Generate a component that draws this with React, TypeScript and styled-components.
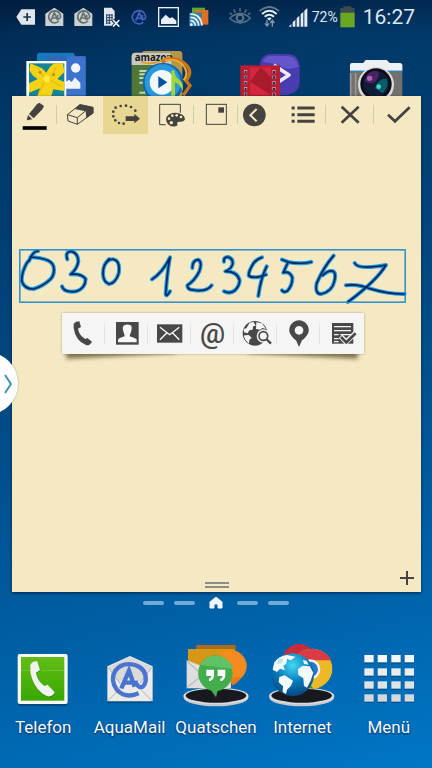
import React from "react";
import styled, { createGlobalStyle } from "styled-components";

const Global = createGlobalStyle`
  * { box-sizing: border-box; }
  body { margin: 0; font-family: Roboto, "Noto Sans", sans-serif; }
  button { border: 0; padding: 0; margin: 0; background: none; font: inherit; color: inherit; cursor: pointer; }
  svg { display: block; }
`;

const Screen = styled.div`
  position: relative;
  min-height: 100vh;
  display: flex;
  flex-direction: column;
  overflow: hidden;
  background: linear-gradient(165deg, #01264d 0%, #013766 12%, #00477f 42%, #0062a9 78%, #0076c6 100%);
`;

const StatusBar = styled.header`
  height: 33px;
  padding: 0 17px 0 16px;
  display: flex;
  align-items: center;
  justify-content: space-between;
  background: linear-gradient(rgba(0, 12, 35, 0.35), rgba(0, 12, 35, 0));
  color: #dce8f4;
`;

const StatusGroup = styled.div<{ $gap: number }>`
  display: flex;
  align-items: center;
  gap: ${(p) => p.$gap}px;
`;

const Percent = styled.span`
  font-size: 14px;
  line-height: 20px;
  margin-left: -4px;
`;

const Clock = styled.time`
  font-size: 21px;
  line-height: 24px;
`;

const HomeRow = styled.div`
  height: 63px;
  padding-top: 17px;
  display: grid;
  grid-template-columns: repeat(4, 1fr);
  overflow: hidden;
`;

const HomeApp = styled.button`
  display: flex;
  justify-content: center;
  align-items: flex-start;
`;

const Note = styled.main`
  flex: 1;
  margin: 0 11px 0 12px;
  display: flex;
  flex-direction: column;
  background: #f4e9c3;
  box-shadow: 0 1px 3px rgba(0, 15, 40, 0.7);
`;

const Toolbar = styled.div`
  height: 38px;
  display: grid;
  grid-template-columns: 45fr 46fr 45fr 46fr 44fr 34fr 54fr 48fr 47fr;
`;

const Tool = styled.button<{ $active?: boolean; $divider?: boolean; $end?: boolean }>`
  display: flex;
  justify-content: ${(p) => (p.$end ? "flex-end" : "center")};
  background: ${(p) =>
    p.$divider ? "linear-gradient(#d5cbab, #d5cbab) right 9px / 1px 19px no-repeat" : "none"};
  background-color: ${(p) => (p.$active ? "#e8d792" : "transparent")};
`;

const Canvas = styled.div`
  flex: 1;
  padding: 115px 15px 0 7px;
`;

const Selection = styled.div`
  outline: 1px solid #2f93d3;
  outline-offset: -1px;
  box-shadow: inset 0 0 0 2px rgba(70, 150, 190, 0.65);

  svg {
    width: 100%;
    height: auto;
    overflow: visible;
  }
`;

const ActionMenu = styled.div`
  position: relative;
  width: 302px;
  height: 41px;
  margin: 10px auto 0;

  &::before,
  &::after {
    content: "";
    position: absolute;
    bottom: -2px;
    width: 110px;
    height: 14px;
    background: rgba(80, 65, 25, 0.7);
    filter: blur(2px);
  }
  &::before {
    left: 4px;
    transform: rotate(-3deg);
  }
  &::after {
    right: 6px;
    transform: rotate(3deg);
  }
`;

const ActionList = styled.div`
  position: relative;
  z-index: 1;
  height: 100%;
  display: grid;
  grid-template-columns: repeat(7, 1fr);
  background: #f5f5f5;
  box-shadow: 0 0 2px rgba(120, 105, 60, 0.6);
`;

const Action = styled.button`
  display: flex;
  align-items: center;
  justify-content: center;
  color: #484848;
  font-size: 28px;
  line-height: 32px;
  font-weight: 500;

  &:not(:last-child) {
    background: linear-gradient(#e3e3e3, #e3e3e3) right center / 1px 20px no-repeat;
  }
`;

const NoteFooter = styled.div`
  height: 28px;
  display: grid;
  grid-template-columns: 1fr 24px 1fr;
  align-items: start;
`;

const Grip = styled.button`
  grid-column: 2;
  height: 6px;
  margin-top: 18px;
  border-top: 2px solid #8f8d86;
  border-bottom: 2px solid #8f8d86;
`;

const AddPage = styled.button`
  justify-self: end;
  width: 14px;
  height: 14px;
  margin: 7px 7px 0 0;
`;

const Pager = styled.nav`
  height: 50px;
  padding-top: 3px;
  display: flex;
  justify-content: center;
  align-items: flex-start;
  gap: 10px;
`;

const PageMark = styled.button<{ $home?: boolean }>`
  width: ${(p) => (p.$home ? 22 : 21)}px;
  height: 16px;
  display: flex;
  align-items: center;
  justify-content: center;

  &::before {
    content: "";
    display: ${(p) => (p.$home ? "none" : "block")};
    width: 100%;
    height: 4px;
    border-radius: 2px;
    background: #70abd8;
  }
`;

const Dock = styled.footer`
  height: 126px;
  display: grid;
  grid-template-columns: repeat(5, 1fr);
`;

const DockApp = styled.button`
  display: flex;
  flex-direction: column;
  align-items: center;
  gap: 9px;
  color: #f4f8fc;
  font-size: 17px;
  line-height: 20px;
  white-space: nowrap;
  text-shadow: 0 1px 2px rgba(0, 20, 50, 0.8);
`;

const EdgeHandle = styled.button`
  position: absolute;
  left: -44px;
  top: 352px;
  width: 62px;
  height: 63px;
  border-radius: 50%;
  background: #fff;
  box-shadow: 0 0 2px rgba(60, 60, 60, 0.4);

  svg {
    margin-left: 48px;
  }
`;

const ink = "#45423f";

function StatusIcons() {
  return (
    <StatusGroup $gap={10}>
      <svg width="19" height="18" viewBox="48 20 57 54">
        <path d="M49 47 L64 24 H105 V70 H64Z" fill="#dfe6ec" />
        <path d="M70 47H93M81.500 35V59" stroke="#14304f" strokeWidth="5" />
      </svg>
      {[0, 1].map((n) => (
        <svg key={n} width="19" height="20" viewBox="135 18 57 60">
          <path d="M136 38 L163 20 L190 38 V75 H136Z" fill="#ccd2d4" />
          <path d="M177 60a18 18 0 1 1 5-14c0 8-9 11-9 3V41M153 58l10-23 10 23M156 51h14" fill="none" stroke="#66706f" strokeWidth="5" />
        </svg>
      ))}
      <svg width="18" height="20" viewBox="309 16 54 60">
        <path d="M312 18H335L344 28V72H312Z" fill="#dfe6ec" />
        <path d="M318 40H338M318 48H338M318 56H338M318 64H332M320 38V67M328 38V67M336 38V58" stroke="#24405e" strokeWidth="3" />
        <path d="M339 55L358 75M358 55L339 75" stroke="#011f45" strokeWidth="10" />
        <path d="M339 55L358 75M358 55L339 75" stroke="#e9f0f6" strokeWidth="5" />
      </svg>
      <svg width="17" height="18" viewBox="397 22 51 54">
        <path d="M434 65a20 20 0 1 1 7-17c0 9-10 12-10 3V42M411 60l11-24 10 24M414 53h14" fill="none" stroke="#4163c0" strokeWidth="5" />
      </svg>
      <svg width="21" height="20" viewBox="477 17 63 60">
        <rect x="479" y="19" width="59" height="56" fill="none" stroke="#e8eef4" strokeWidth="4" />
        <path d="M486 68V55L500 40L512 51L520 48L532 58V68Z" fill="#e8eef4" />
      </svg>
      <svg width="20" height="20" viewBox="566 16 60 60">
        <path d="M575 18H614V58H575Z" fill="#69a32f" />
        <path d="M586 25H624V69H586Z" fill="#dd6f26" />
        <path d="M567 33H605L600 74H567Z" fill="#2d80aa" />
        <path d="M570 57q13 0 15 15M570 47q23 0 25 25M570 37q32 0 35 35" fill="none" stroke="#e7f0f4" strokeWidth="5" />
        <circle cx="573" cy="69" r="4" fill="#fff" />
      </svg>
    </StatusGroup>
  );
}

function SystemIcons() {
  return (
    <StatusGroup $gap={8}>
      <svg width="22" height="20" viewBox="46 20 66 60">
        <path d="M48 54Q80 25 110 54Q80 82 48 54Z" fill="none" stroke="#5d758b" strokeWidth="4" />
        <circle cx="79" cy="53" r="10" fill="none" stroke="#5d758b" strokeWidth="6" />
        <path d="M79 23V34M60 27L65 37M98 27L93 37M49 37L55 43M109 37L103 43" stroke="#5d758b" strokeWidth="4" />
      </svg>
      <svg width="21" height="22" viewBox="133 14 63 66">
        <path d="M135 29Q164 5 193 29" fill="none" stroke="#63788e" strokeWidth="6" />
        <path d="M142 38Q164 19 186 38M150 46Q164 34 178 46" fill="none" stroke="#e4ebf2" strokeWidth="6" />
        <path d="M157 51Q164 46 171 51L164 58Z" fill="#e4ebf2" />
        <path d="M157 55V73M151 66L157 74L163 66M173 76V58M167 65L173 57L179 65" fill="none" stroke="#8799aa" strokeWidth="4" />
      </svg>
      <svg width="20" height="20" viewBox="221 18 60 60">
        <path d="M223 77L231 69V77ZM235 77V64L243 56V77ZM247 77V52L255 44V77ZM259 77V40L267 32V77ZM270 77V29L279 21V77Z" fill="#e4ebf2" />
      </svg>
      <StatusGroup $gap={2}>
        <Percent>72%</Percent>
        <svg width="15" height="22" viewBox="377 14 45 66">
          <path d="M387 15H411V20H421V34H378V20H387Z" fill="#3d4b50" />
          <rect x="378" y="34" width="43" height="44" fill="#6aa722" />
        </svg>
      </StatusGroup>
      <Clock>16:27</Clock>
    </StatusGroup>
  );
}

function HomeApps() {
  return (
    <HomeRow>
      <HomeApp aria-label="Gallery">
        <svg width="66" height="46" viewBox="63 30 198 138">
          <rect x="111" y="38" width="113" height="80" rx="8" fill="#1778bd" />
          <rect x="138" y="49" width="119" height="130" rx="5" fill="#3166bb" />
          <path d="M200 49H257V166H200Z" fill="#3c73cc" />
          <circle cx="227" cy="84" r="14" fill="#f1f5fa" />
          <path d="M196 145V127L207 119L215 126L225 112L241 129V146H196Z" fill="#f1f5fa" />
          <rect x="79" y="63" width="120" height="115" fill="#fff" />
          <rect x="87" y="70" width="106" height="110" fill="#168498" />
          <path d="M91 70L126 85L139 98L149 82L162 70H189L193 96L172 117L193 126V153L160 148L150 180H108L120 145L87 158V130L113 117L99 107L88 91Z" fill="#f4d315" />
          <path d="M111 82L137 118L116 160M169 81L148 119L183 139" fill="none" stroke="#e2b30a" strokeWidth="3" />
          <path d="M130 112L140 105L152 112L146 128L133 126Z" fill="#ffe93b" />
          <circle cx="120" cy="97" r="4" fill="#c77d09" /><circle cx="161" cy="104" r="4" fill="#c77d09" />
        </svg>
      </HomeApp>
      <HomeApp aria-label="Media">
        <svg width="66" height="46" viewBox="387 30 198 138">
          <rect x="425" y="33" width="122" height="145" rx="10" fill="#b69747" />
          <rect x="395" y="38" width="120" height="145" rx="11" fill="#4e7738" />
          <path d="M395 75V49q0-11 11-11H505q10 0 10 11V75Z" fill="#c8c9c2" />
          <text x="404" y="64" fontFamily="Open Sans, sans-serif" fontWeight="700" fontSize="29" fill="#171717">amazon</text>
          <path d="M418 93H450M418 103H450M418 114H450M418 128H435V158H418" stroke="#c3d4b4" strokeWidth="6" fill="none" />
          <path d="M423 65Q462 81 510 48" fill="none" stroke="#e69722" strokeWidth="5" />
          <path d="M486 66Q524 45 555 71Q581 94 558 122L570 137L550 166" fill="none" stroke="#c87317" strokeWidth="10" />
          <path d="M494 62Q530 53 550 77Q568 98 551 121" fill="none" stroke="#f5a82b" strokeWidth="6" />
          <circle cx="489" cy="129" r="61" fill="#1466ad" />
          <circle cx="488" cy="127" r="54" fill="#2799dc" />
          <circle cx="486" cy="127" r="37" fill="#f2f7f9" />
          <path d="M475 109L502 127L475 145Z" fill="#08539e" />
          <path d="M514 170V92L523 90Q524 110 538 120Q553 130 547 153Q540 132 525 127V170Z" fill="#a5d639" />
        </svg>
      </HomeApp>
      <HomeApp aria-label="Video">
        <svg width="66" height="46" viewBox="63 30 198 138">
          <path d="M133 65Q139 45 162 42H218Q247 44 251 75V128Q249 157 216 165H160Q131 157 130 133Z" fill="#493bb0" />
          <path d="M140 65Q148 48 165 48H214Q242 48 247 80Q208 95 190 74Z" fill="#6455cb" />
          <path d="M173 75L219 105L179 131" fill="none" stroke="#ede9fa" strokeWidth="11" strokeLinejoin="round" />
          <rect x="73" y="76" width="119" height="100" fill="#b71e32" />
          <path d="M102 82H165V165H102Z" fill="#d4273d" /><path d="M134 82L165 112V165L102 125Z" fill="#a71b2c" />
          <path d="M89 90V170M174 90V170" stroke="#d6bfc6" strokeWidth="9" strokeDasharray="9 8" />
          <path d="M89 92V170M174 92V170" stroke="#162e52" strokeWidth="6" strokeDasharray="7 10" />
        </svg>
      </HomeApp>
      <HomeApp aria-label="Camera">
        <svg width="66" height="46" viewBox="387 30 198 138">
          <path d="M402 75q0-6 7-6H442L449 60H512L521 69H551q8 0 8 8V175H402Z" fill="#73706d" />
          <path d="M402 92V75q0-6 7-6H442L449 60H512L521 69H551q8 0 8 8V92Z" fill="#edf0f4" />
          <path d="M402 94H559" stroke="#2b83bd" strokeWidth="4" />
          <path d="M404 99V170M419 99V170" stroke="#9b9792" strokeWidth="5" />
          <circle cx="480" cy="134" r="54" fill="#deddda" />
          <circle cx="480" cy="132" r="47" fill="#090d19" />
          <circle cx="480" cy="132" r="39" fill="#101c35" />
          <path d="M446 122q8-34 39-28q10 12-7 31q-15 12-32-3Z" fill="#4b2365" />
          <path d="M477 145q7-30 35-29q10 20-12 44Z" fill="#095d6b" />
          <circle cx="461" cy="115" r="8" fill="#aa63b9" /><circle cx="488" cy="140" r="7" fill="#42d9ca" />
        </svg>
      </HomeApp>
    </HomeRow>
  );
}

const lassoDots = [
  [338, 215], [345, 203], [360, 198], [376, 197], [391, 201], [404, 212],
  [338, 229], [344, 241], [355, 249], [369, 251],
];

function NoteToolbar() {
  return (
    <Toolbar role="toolbar" aria-label="Note tools">
      <Tool aria-label="Pen" $divider>
        <svg width="44" height="38" viewBox="37 168 132 114">
          <path d="M116 188L130 198L125 208L99 235L85 222L109 193Z" fill={ink} />
          <path d="M82 225L95 238L78 241Z" fill={ink} />
          <path d="M66 264H138" stroke="#000" strokeWidth="11" />
        </svg>
      </Tool>
      <Tool aria-label="Eraser">
        <svg width="44" height="38" viewBox="174 168 132 114">
          <path d="M202 224L240 194L279 202V219L232 253L204 243Z" fill="none" stroke={ink} strokeWidth="3" strokeLinejoin="round" />
          <path d="M202 224L232 233L256 213M232 233V253" fill="none" stroke={ink} strokeWidth="3" />
          <path d="M224 207L240 193L280 202V220L259 235L257 214Z" fill={ink} />
        </svg>
      </Tool>
      <Tool aria-label="Select" $active>
        <svg width="44" height="38" viewBox="310 168 132 114">
          {lassoDots.map(([x, y]) => <circle key={`${x}-${y}`} cx={x} cy={y} r="4" fill={ink} />)}
          <path d="M375 229H401V221L418 236L401 250V243H375Z" fill={ink} />
        </svg>
      </Tool>
      <Tool aria-label="Page style" $divider>
        <svg width="44" height="38" viewBox="447 168 132 114">
          <path d="M497 254H479V193H541V218" fill="none" stroke={ink} strokeWidth="3" />
          <path d="M498 235Q503 218 528 218Q553 220 555 237Q552 247 538 245Q528 246 533 256Q519 264 506 254Q498 248 498 235Z" fill={ink} />
          <g fill="#f4e9c3"><circle cx="507" cy="236" r="4" /><circle cx="517" cy="227" r="4" /><circle cx="530" cy="226" r="4" /><circle cx="543" cy="231" r="4" /><circle cx="514" cy="248" r="5" /></g>
        </svg>
      </Tool>
      <Tool aria-label="Resize" $divider>
        <svg width="44" height="38" viewBox="-66 168 132 114">
          <rect x="-29" y="193" width="60" height="60" fill="none" stroke={ink} strokeWidth="3" />
          <rect x="7" y="202" width="17" height="16" fill={ink} />
        </svg>
      </Tool>
      <Tool aria-label="Back">
        <svg width="34" height="38" viewBox="66 168 102 114">
          <circle cx="115" cy="225" r="34" fill={ink} />
          <path d="M122 207L103 226L122 244" fill="none" stroke="#f4e9c3" strokeWidth="6" />
        </svg>
      </Tool>
      <Tool aria-label="List" $divider $end>
        <svg width="44" height="38" viewBox="198 168 132 114">
          <path d="M227 204H236M227 224H236M227 244H236M244 204H296M244 224H296M244 244H296" stroke={ink} strokeWidth="9" />
        </svg>
      </Tool>
      <Tool aria-label="Close" $divider>
        <svg width="44" height="38" viewBox="336 168 132 114">
          <path d="M377 200L428 248M428 200L377 248" stroke={ink} strokeWidth="8" />
        </svg>
      </Tool>
      <Tool aria-label="Done">
        <svg width="44" height="38" viewBox="478 168 132 114">
          <path d="M514 224L535 244L579 202" fill="none" stroke={ink} strokeWidth="8" />
        </svg>
      </Tool>
    </Toolbar>
  );
}

const strokes =
  "M115 48Q98 48 87 78M91 66Q124 68 143 76Q162 84 162 104Q162 121 152 132Q130 153 101 162Q72 162 65 137Q65 112 80 85L91 71" +
  "M202 73Q194 50 214 49Q234 54 235 79Q232 101 212 118Q245 115 257 132Q256 160 229 169Q192 174 186 154" +
  "M328 72Q309 88 309 114Q309 141 327 147Q346 145 356 116Q362 78 341 73Q324 71 313 92" +
  "M456 133Q489 111 510 67Q502 107 497 177Q499 188 510 169" +
  "M577 99Q577 76 594 74Q608 80 598 109Q584 137 562 151Q562 165 580 165Q620 172 635 151" +
  "M672 80Q670 66 684 66Q702 72 697 90Q690 105 676 109Q712 109 719 136Q719 152 705 166Q690 178 672 169" +
  "M786 67Q770 72 761 84Q746 108 746 121Q754 130 780 125L798 119M800 94Q782 130 775 183" +
  "M846 74L868 82Q905 88 934 81M863 84L850 113Q868 107 877 127Q878 150 862 168Q850 174 846 166" +
  "M1001 62Q971 96 950 145Q944 177 963 177Q996 170 1003 139Q1010 112 997 108Q984 106 968 121" +
  "M1064 84Q1073 105 1158 90Q1130 137 1044 201M1038 151Q1073 146 1110 161Q1166 178 1214 177";

function NoteActions() {
  return (
    <ActionMenu>
      <ActionList role="toolbar" aria-label="Link actions">
        <Action aria-label="Call">
          <svg width="40" height="36" viewBox="41 47 120 108">
            <path d="M73 70Q79 63 90 63L95 80L86 85Q89 104 108 116L114 113L128 124Q122 136 111 135Q78 121 73 83Z" fill="#484848" />
          </svg>
        </Action>
        <Action aria-label="Contact">
          <svg width="40" height="36" viewBox="168 45 120 108">
            <rect x="198" y="63" width="68" height="68" fill="#484848" />
            <path d="M204 124V115Q209 110 224 106L223 100Q213 76 224 72Q231 69 241 72Q250 77 240 101L239 106Q254 110 260 115V124Z" fill="#f7f7f7" />
          </svg>
        </Action>
        <Action aria-label="Message">
          <svg width="40" height="36" viewBox="299 47 120 108">
            <rect x="323" y="72" width="76" height="55" fill="#484848" />
            <path d="M332 81L361 103L390 81M332 118L352 98M390 118L370 98" fill="none" stroke="#fff" strokeWidth="4" />
          </svg>
        </Action>
        <Action aria-label="Email">@</Action>
        <Action aria-label="Search the web">
          <svg width="40" height="36" viewBox="60 47 120 108">
            <circle cx="117" cy="99" r="37" fill="#484848" />
            <path d="M101 67L113 65L119 76L111 78L110 88L100 90L95 99L84 96L83 86L91 84ZM121 66L138 69L150 86L139 83L132 88L120 86ZM85 105L98 104L107 112L100 119L99 130Q87 121 84 110Z" fill="#f5f5f5" />
            <circle cx="142" cy="107" r="20" fill="#f5f5f5" />
            <path d="M147 113L164 130" stroke="#f5f5f5" strokeWidth="14" />
            <circle cx="142" cy="107" r="13" fill="#f5f5f5" stroke="#484848" strokeWidth="5" />
            <path d="M151 116L165 130" stroke="#484848" strokeWidth="7" />
          </svg>
        </Action>
        <Action aria-label="Map">
          <svg width="40" height="36" viewBox="190 47 120 108">
            <path fillRule="evenodd" d="M250 60a30 30 0 0 1 29 34Q274 109 259 120L250 140L241 120Q226 109 221 94A30 30 0 0 1 250 60ZM250 77a13 13 0 1 0 .1 0Z" fill="#484848" />
          </svg>
        </Action>
        <Action aria-label="Task">
          <svg width="40" height="36" viewBox="317 47 120 108">
            <rect x="347" y="68" width="64" height="62" fill="#484848" />
            <path d="M353 79H404M353 91H404M353 103H367M372 103H404M353 115H367M372 115H395M353 124H367" stroke="#f5f5f5" strokeWidth="4" />
            <path d="M373 108L389 125L417 99" fill="none" stroke="#f5f5f5" strokeWidth="15" />
            <path d="M374 110L390 126L418 99" fill="none" stroke="#484848" strokeWidth="8" />
          </svg>
        </Action>
      </ActionList>
    </ActionMenu>
  );
}

const diskRim = (x: number) => (
  <>
    <ellipse cx={x} cy="188" rx="97" ry="26" fill="#c4c6c9" />
    <ellipse cx={x} cy="183" rx="98" ry="25" fill="#dadcde" />
    <ellipse cx={x} cy="182" rx="91" ry="21" fill="#17191f" />
  </>
);

function DockApps() {
  return (
    <Dock>
      <DockApp>
        <svg width="66" height="66" viewBox="31 21 198 198">
          <defs>
            <linearGradient id="phoneGreen" x2="0" y2="1"><stop stopColor="#63bd16" /><stop offset="1" stopColor="#38a800" /></linearGradient>
          </defs>
          <rect x="54" y="61" width="150" height="152" rx="6" fill="#063965" opacity=".6" />
          <rect x="54" y="57" width="150" height="150" rx="6" fill="#f8faf7" />
          <rect x="64" y="66" width="130" height="131" fill="url(#phoneGreen)" />
          <path d="M64 106H194" stroke="#7bd240" strokeWidth="2" />
          <path d="M94 91Q102 79 115 81L123 107L111 115Q114 137 135 156L145 151L166 175Q161 189 144 187Q104 169 92 115Z" fill="#1f6a0b" opacity=".5" />
          <path d="M92 89Q100 77 113 79L121 105L109 113Q112 136 134 153L144 149L165 172Q160 186 143 184Q104 166 92 113Z" fill="#f1f3ef" />
        </svg>
        Telefon
      </DockApp>
      <DockApp>
        <svg width="66" height="66" viewBox="290 21 198 198">
          <path d="M321 97L389 66L457 97V205H321Z" fill="#063965" opacity=".5" />
          <path d="M321 94L389 63L457 94V199H321Z" fill="#ebebe8" />
          <path d="M324 96L389 66L454 96L421 142L389 123L356 142Z" fill="#dadbd9" />
          <path d="M322 198L371 149L389 139L407 149L456 198M323 97L360 146M455 97L418 146" fill="none" stroke="#b2b4b4" strokeWidth="3" />
          <path d="M415 175Q377 192 350 165Q328 135 345 107Q366 80 404 90Q440 102 436 138Q431 161 416 155Q408 151 405 137" fill="none" stroke="#4a74d0" strokeWidth="13" />
          <path d="M363 160L386 107L403 155M371 143H399" fill="none" stroke="#4a74d0" strokeWidth="13" />
        </svg>
        AquaMail
      </DockApp>
      <DockApp>
        <svg width="66" height="66" viewBox="-99 21 198 198">
          {diskRim(0)}
          <path d="M-59 30H59V117H-59Z" fill="#af6b1c" />
          <path d="M-84 42H55V120H-84Z" fill="#d79716" />
          <path d="M-88 76L-25 100L45 75V160H-88Z" fill="#dedede" />
          <path d="M-88 78L-40 120L-88 158" fill="none" stroke="#aaa" strokeWidth="3" />
          <circle cx="44" cy="93" r="48" fill="#f58a1f" />
          <path d="M35 130L78 125Q66 143 50 151Z" fill="#e8791c" />
          <path d="M0 61A54 54 0 0 1 5 168L0 187L-14 167A54 54 0 0 1 0 61Z" fill="#42ad4c" />
          <path d="M-47 90Q-29 59 5 62Q43 68 51 102Z" fill="#61c265" />
          <path d="M-29 104H-6V124Q-9 137 -21 139V131Q-14 129 -14 123H-29ZM5 104H28V124Q25 137 13 139V131Q20 129 20 123H5Z" fill="#fff" />
        </svg>
        Quatschen
      </DockApp>
      <DockApp>
        <svg width="66" height="66" viewBox="160 21 198 198">
          <defs>
            <radialGradient id="ocean" cx=".5" cy=".28" r=".75"><stop stopColor="#45d9f4" /><stop offset=".5" stopColor="#087ebd" /><stop offset="1" stopColor="#07437e" /></radialGradient>
          </defs>
          {diskRim(258)}
          <circle cx="250" cy="76" r="49" fill="#c92d3c" />
          <circle cx="290" cy="101" r="60" fill="#edb926" />
          <path d="M235 75Q254 42 290 41Q332 44 347 76H277Z" fill="#da3b44" />
          <path d="M253 101L293 161Q257 161 238 132Z" fill="#3a9a48" />
          <circle cx="284" cy="103" r="30" fill="#f4f7f8" /><circle cx="284" cy="103" r="23" fill="#2877c8" />
          <circle cx="231" cy="119" r="64" fill="url(#ocean)" />
          <path d="M176 82Q190 62 214 60L239 65L226 76L214 72L212 86L203 92L208 106L193 101L184 111L171 104ZM191 126L207 121L232 137L226 152L214 164L211 177L201 171L202 154L189 142ZM247 102L261 92L282 94L293 113L285 137L274 158L265 153L263 130L248 120ZM262 74L273 78L279 89L265 87Z" fill="#f5fafc" />
          <path d="M191 68L204 73L197 85L183 87Z" fill="#bde6ef" />
        </svg>
        Internet
      </DockApp>
      <DockApp>
        <svg width="66" height="66" viewBox="419 21 198 198">
          {[60, 100, 139, 178].map((y, row) =>
            [444, 484, 525, 565].map((x) => (
              <g key={`${x}-${y}`}>
                <rect x={x} y={y + 3} width="28" height="23" fill="#034472" opacity=".7" />
                <rect x={x} y={y} width="28" height="22" fill={["#f3f6f7", "#e9edef", "#dee3e6", "#d2d8dc"][row]} />
              </g>
            )),
          )}
        </svg>
        Menü
      </DockApp>
    </Dock>
  );
}

export default function App() {
  return (
    <>
      <Global />
      <Screen>
        <StatusBar>
          <StatusIcons />
          <SystemIcons />
        </StatusBar>
        <HomeApps />
        <Note>
          <NoteToolbar />
          <Canvas>
            <Selection>
              <svg viewBox="57 42 1161 162" role="img" aria-label="030 1234567">
                <path d={strokes} fill="none" stroke="#2199e0" strokeWidth="12" strokeLinecap="round" strokeLinejoin="round" />
                <path d={strokes} fill="none" stroke="#07265c" strokeWidth="5" strokeLinecap="round" strokeLinejoin="round" />
              </svg>
            </Selection>
            <NoteActions />
          </Canvas>
          <NoteFooter>
            <Grip aria-label="Resize note" />
            <AddPage aria-label="Add page">
              <svg width="14" height="14" viewBox="0 0 14 14"><path d="M0 7H14M7 0V14" stroke={ink} strokeWidth="2" /></svg>
            </AddPage>
          </NoteFooter>
        </Note>
        <Pager aria-label="Home screens">
          <PageMark aria-label="Screen 1" />
          <PageMark aria-label="Screen 2" />
          <PageMark $home aria-label="Home">
            <svg width="14" height="12" viewBox="0 0 14 12"><path d="M7 0L13 5V11H9V7H5V11H1V5Z" fill="#f1f6fa" stroke="#f1f6fa" strokeLinejoin="round" /></svg>
          </PageMark>
          <PageMark aria-label="Screen 4" />
          <PageMark aria-label="Screen 5" />
        </Pager>
        <DockApps />
        <EdgeHandle aria-label="Open side panel">
          <svg width="9" height="20" viewBox="0 0 9 20"><path d="M1 1L7 10L1 19" fill="none" stroke="#3e93b5" strokeWidth="2" /></svg>
        </EdgeHandle>
      </Screen>
    </>
  );
}
